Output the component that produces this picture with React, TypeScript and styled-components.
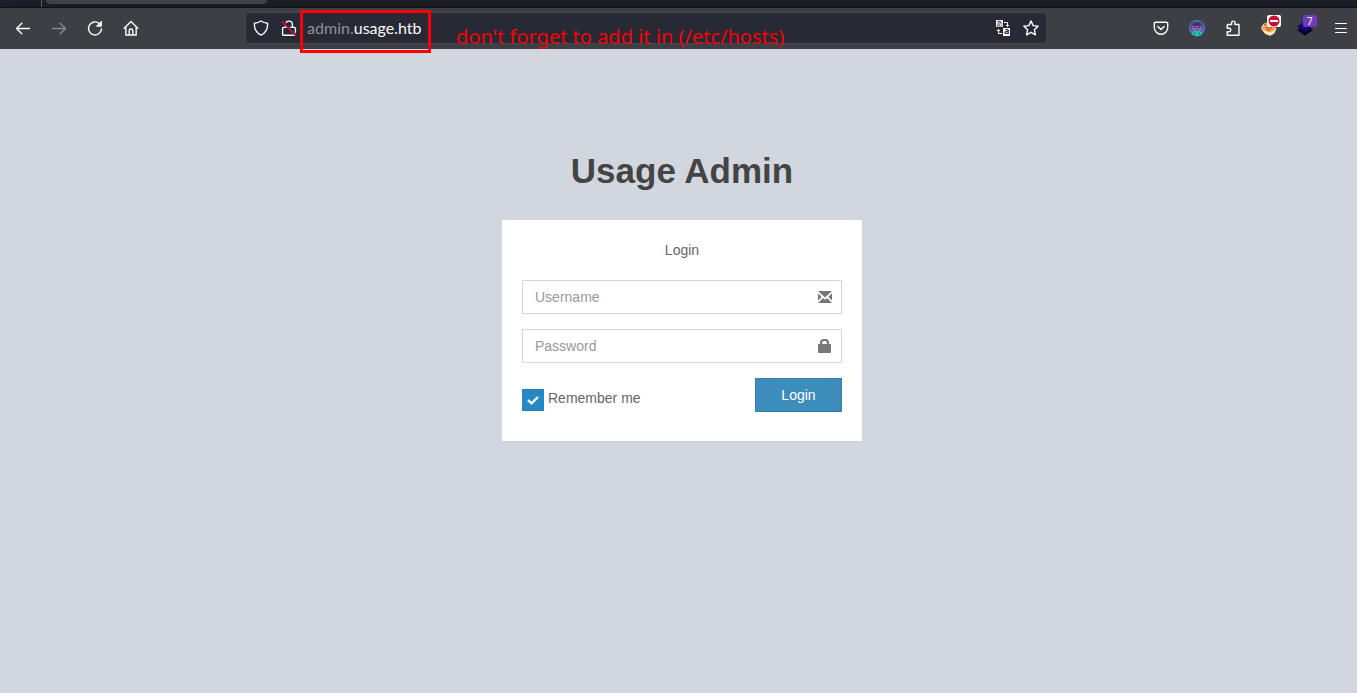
import React from "react";
import styled, { createGlobalStyle } from "styled-components";

const GlobalStyle = createGlobalStyle`
  *, *::before, *::after { box-sizing: border-box; }
  html, body, #root { min-height: 100%; }
  body {
    margin: 0;
    background: #d2d6de;
    color: #333;
    font: 14px/20px "Liberation Sans", Arial, sans-serif;
  }
`;

const Browser = styled.header`
  font-family: "Noto Sans", sans-serif;
  color: #fbfbfe;
`;

const TabStrip = styled.div`
  display: flex;
  height: 8px;
  background: linear-gradient(90deg, #191f2b, #1b1c23 60px, #1a1d26);
  border-bottom: 1px solid #101115;
`;

const PinnedArea = styled.div`
  width: 42px;
  border-right: 1px solid #55565b;
`;

const ActiveTab = styled.div`
  width: 221px;
  height: 4px;
  margin-left: 4px;
  border-radius: 0 0 4px 4px;
  background: #404146;
`;

const Toolbar = styled.div`
  display: flex;
  align-items: center;
  height: 41px;
  padding: 0 8px 1px 15px;
  background: #3e3f44;
`;

const ButtonGroup = styled.div`
  display: flex;
  gap: 20px;
`;

const IconButton = styled.button<{ $dim?: boolean }>`
  position: relative;
  display: block;
  width: 16px;
  height: 16px;
  padding: 0;
  border: 0;
  background: none;
  color: ${(p) => (p.$dim ? "#88898d" : "#fbfbfe")};

  svg { display: block; overflow: visible; }
`;

const Spacer = styled.div`
  flex: 107 1 0;
`;

const AddressBar = styled.div`
  flex: 800 1 0;
  display: flex;
  align-items: center;
  gap: 12px;
  min-width: 0;
  height: 32px;
  padding: 0 7px;
  border: 1px solid #45464d;
  border-radius: 4px;
  background: #272934;
`;

const AddressSlot = styled(AddressBar)`
  margin: 0 1px;
`;

const Address = styled.div`
  position: relative;
  flex: 1;
  margin-left: -2px;
  font-family: Lato, "Noto Sans", sans-serif;
  font-size: 16px;
  line-height: 20px;
  color: #8f9098;
  white-space: nowrap;

  strong { font-weight: 400; color: #fbfbfe; }
`;

const HighlightBox = styled.div`
  position: absolute;
  left: -7px;
  top: -8px;
  width: 131px;
  height: 43px;
  border: 3px solid #fb0007;
`;

const Note = styled.div`
  position: absolute;
  left: 149px;
  top: 5px;
  font-family: "Noto Sans", sans-serif;
  font-size: 20px;
  line-height: 28px;
  color: #f40409;
`;

const Badge = styled.span<{ $color: string }>`
  position: absolute;
  top: -5px;
  right: -4px;
  display: grid;
  place-items: center;
  width: 14px;
  height: 12px;
  border-radius: 2px;
  background: ${(p) => p.$color};
  color: #fff;
  font: 10px/12px "Noto Sans", sans-serif;
`;

const Page = styled.main`
  padding: 97px 0 40px 7px;
`;

const LoginBox = styled.div`
  width: 360px;
  max-width: 100%;
  margin: 0 auto;
`;

const Title = styled.h1`
  margin: 0 0 24px;
  font-size: 35px;
  line-height: 50px;
  font-weight: 700;
  text-align: center;
  color: #444;
`;

const Card = styled.form`
  padding: 20px;
  background: #fff;
  color: #666;
`;

const Message = styled.p`
  margin: 0 0 20px;
  text-align: center;
`;

const Field = styled.label`
  position: relative;
  display: block;
  margin-bottom: 15px;

  svg {
    position: absolute;
    top: 10px;
    right: 10px;
    color: #777;
  }
`;

const TextInput = styled.input`
  display: block;
  width: 100%;
  height: 34px;
  padding: 6px 42px 6px 12px;
  border: 1px solid #d2d6de;
  border-radius: 0;
  background: #fff;
  font: inherit;
  color: #555;

  &::placeholder { color: #999; opacity: 1; }
`;

const Actions = styled.div`
  display: flex;
  justify-content: space-between;
  align-items: flex-start;
`;

const Remember = styled.label`
  display: flex;
  gap: 4px;
  margin: 10px 0;
`;

const CheckWrap = styled.span`
  display: grid;
  margin-top: 1px;

  > * { grid-area: 1 / 1; }
  svg { pointer-events: none; }
`;

const Checkbox = styled.input`
  appearance: none;
  width: 22px;
  height: 22px;
  margin: 0;
  border: 1px solid #d2d6de;

  &:checked { border: 0; background: #2489c5; }
`;

const SubmitButton = styled.button`
  width: 87px;
  height: 34px;
  padding: 0;
  border: 1px solid #367fa9;
  border-radius: 0;
  background: #3c8dbc;
  color: #fff;
  font: inherit;
`;

type IconProps = { children: React.ReactNode; width?: number };

const LineIcon = ({ children, width = 1.4 }: IconProps) => (
  <svg
    width="16"
    height="16"
    viewBox="0 0 16 16"
    fill="none"
    stroke="currentColor"
    strokeWidth={width}
    strokeLinecap="round"
    strokeLinejoin="round"
    aria-hidden="true"
  >
    {children}
  </svg>
);

const shield = "M8 1 C10 2.4 12 3 14.6 3.2 C14.9 8.8 13 12.8 8 15.1 C3 12.8 1.1 8.8 1.4 3.2 C4 3 6 2.4 8 1Z";

export default function App() {
  return (
    <>
      <GlobalStyle />
      <Browser>
        <TabStrip>
          <PinnedArea />
          <ActiveTab />
        </TabStrip>
        <Toolbar>
          <ButtonGroup>
            <IconButton aria-label="Back">
              <LineIcon><path d="M14.5 8.5H1.5M6.8 3.2 1.5 8.5l5.3 5.3" /></LineIcon>
            </IconButton>
            <IconButton aria-label="Forward" $dim disabled>
              <LineIcon><path d="M1.5 8.5h13M9.2 3.2l5.3 5.3-5.3 5.3" /></LineIcon>
            </IconButton>
            <IconButton aria-label="Reload">
              <LineIcon>
                <path d="M12.4 3.6A6.5 6.5 0 1 0 14.5 8.9" />
                <path d="M14.5 1.5v4.7H9.8z" fill="currentColor" strokeWidth="1" />
              </LineIcon>
            </IconButton>
            <IconButton aria-label="Home">
              <LineIcon>
                <path d="M1.2 8.2 8 1.6l6.8 6.6M2.8 7v8h10.4V7M6.2 15v-4.2a1.8 1.8 0 0 1 3.6 0V15" />
              </LineIcon>
            </IconButton>
          </ButtonGroup>
          <Spacer />
          <AddressSlot>
            <IconButton aria-label="Tracking protection">
              <LineIcon><path d={shield} /></LineIcon>
            </IconButton>
            <IconButton aria-label="Connection is not secure">
              <LineIcon>
                <path d="M4.6 7.2V4.5a3.4 3.4 0 0 1 6.8 0v2.7M2.6 7.4h10.8a1 1 0 0 1 1 1v5.8a1 1 0 0 1-1 1H2.6a1 1 0 0 1-1-1V8.4a1 1 0 0 1 1-1z" />
                <path d="M2 1.6 14.8 15" stroke="#272934" strokeWidth="2.4" />
                <path d="M1.2 2 14.5 15.2" stroke="#e20e3d" strokeWidth="1.5" />
              </LineIcon>
            </IconButton>
            <Address>
              admin.<strong>usage.htb</strong>
              <HighlightBox />
              <Note>don't forget to add it in (/etc/hosts)</Note>
            </Address>
            <IconButton aria-label="Translate page">
              <svg width="16" height="16" viewBox="0 0 16 16" aria-hidden="true">
                <rect x="1" y="0" width="7" height="7" fill="#fbfbfe" />
                <rect x="8" y="8" width="7" height="8" fill="#fbfbfe" />
                <text x="1" y="6" fontSize="7" fontFamily="Noto Sans CJK JP" fill="#272934">あ</text>
                <text x="9" y="14" fontSize="9" fontWeight="700" fontFamily="Noto Sans" fill="#272934">a</text>
                <path d="M9 2.5h3.5v4M11 5l1.5 1.5L14 5M7 13.5H3.5v-4M2 11l1.5-1.5L5 11" fill="none" stroke="#fbfbfe" />
              </svg>
            </IconButton>
            <IconButton aria-label="Bookmark this page">
              <LineIcon>
                <path d="m8 .9 2.1 4.7 5 .6-3.7 3.5 1 5.2L8 12.3l-4.4 2.6 1-5.2L.9 6.2l5-.6z" />
              </LineIcon>
            </IconButton>
          </AddressSlot>
          <Spacer />
          <ButtonGroup>
            <IconButton aria-label="Pocket">
              <LineIcon>
                <path d="M2.5 2.2h11a1.2 1.2 0 0 1 1.2 1.2v4.1a6.7 6.7 0 0 1-13.4 0V3.4a1.2 1.2 0 0 1 1.2-1.2zM4.8 6.4 8 9.5l3.2-3.1" />
              </LineIcon>
            </IconButton>
            <IconButton aria-label="Profile extension">
              <svg width="16" height="16" viewBox="0 0 16 16" aria-hidden="true">
                <circle cx="8" cy="8" r="8" fill="#4877b8" />
                <path d="M1 4 4 1.5 8 3l4-2 3 4-1 4-2 2H4L1 9z" fill="#55509b" />
                <path d="M3.5 3.5 8 1.5l4.5 2L12 6H4z" fill="#3b3765" />
                <path d="M4 6.5h8l1 2.5-2 2H5L3 9z" fill="#b45ab5" />
                <path d="M5 7h2v1H5zM9 7h2v1H9zM6.5 9.5h3v1h-3z" fill="#3a2861" />
                <path d="M3 12.5 6 10.5h4l3 2v2A8 8 0 0 1 3 14.3z" fill="#22c1aa" />
                <path d="M5.5 12v3M10.5 12v3" stroke="#168a91" />
              </svg>
            </IconButton>
            <IconButton aria-label="Extensions">
              <LineIcon>
                <path d="M5.6 4.5h1V2.8a1.7 1.7 0 0 1 3.4 0v1.7h4v10.7H2.2v-3.5h1.9a1.7 1.7 0 0 0 0-3.4H2.2V5.5a1 1 0 0 1 1-1z" />
              </LineIcon>
            </IconButton>
            <IconButton aria-label="Cookie manager">
              <svg width="16" height="16" viewBox="0 0 16 16" aria-hidden="true">
                <path d="M.5 7.5 3 3l6-.5 6 5-1.5 4.8L9 15.5 4 14z" fill="#f4a24c" />
                <path d="M.5 7.5 3 4M.5 8.5 4 13l5 2.3 4-2 2-5-3 3.5-4 1-4-1.500z" fill="#f5e3c8" stroke="#f5e3c8" />
                <path d="m4 7 3-2 5 1-2 4-5-1z" fill="#f08a30" />
                <path d="M5 8h2M8 7l3 1M6 10h3M3 5l2-1" stroke="#8b562c" />
              </svg>
              <Badge $color="#fff">
                <svg width="12" height="12" viewBox="0 0 12 12">
                  <circle cx="6" cy="6" r="5.5" fill="#cc1034" />
                  <path d="M2 6h8" stroke="#fff" strokeWidth="2" />
                </svg>
              </Badge>
            </IconButton>
            <IconButton aria-label="Technology profiler, 7 found">
              <svg width="16" height="16" viewBox="0 0 16 16" aria-hidden="true">
                <path d="M0 10 8 4.5l8 5.5-8 5.8z" fill="#06042a" />
                <path d="M0 6.5 8 1l8 5.5-8 5.700z" fill="#19006e" />
              </svg>
              <Badge $color="#6d3cbc">7</Badge>
            </IconButton>
            <IconButton aria-label="Menu">
              <LineIcon width={1}><path d="M2.5 3.5h11M2.5 8.5h11M2.5 12.5h11" /></LineIcon>
            </IconButton>
          </ButtonGroup>
        </Toolbar>
      </Browser>

      <Page>
        <LoginBox>
          <Title>Usage Admin</Title>
          <Card onSubmit={(e) => e.preventDefault()}>
            <Message>Login</Message>
            <Field>
              <TextInput type="text" name="username" placeholder="Username" aria-label="Username" />
              <svg width="14" height="14" viewBox="0 0 14 14" fill="currentColor" aria-hidden="true">
                <path d="M0 1h14L7 7.6zM0 3.2 3.7 6.9 0 10.6zM14 3.2 10.3 6.9 14 10.6zM0 13l5-5L7 9.8 9 8l5 5z" />
              </svg>
            </Field>
            <Field>
              <TextInput type="password" name="password" placeholder="Password" aria-label="Password" />
              <svg width="14" height="14" viewBox="0 0 14 14" fill="currentColor" aria-hidden="true">
                <path d="M2 5V3.5A3.5 3.5 0 0 1 5.5 0h2A3.5 3.5 0 0 1 11 3.5V5h1a1 1 0 0 1 1 1v7a1 1 0 0 1-1 1H1a1 1 0 0 1-1-1V6a1 1 0 0 1 1-1zM4.2 5h4.6V3.7A1.7 1.7 0 0 0 7.1 2H5.9a1.7 1.7 0 0 0-1.7 1.7z" fillRule="evenodd" />
              </svg>
            </Field>
            <Actions>
              <Remember>
                <CheckWrap>
                  <Checkbox type="checkbox" name="remember" defaultChecked />
                  <svg width="22" height="22" viewBox="0 0 22 22" fill="none" aria-hidden="true">
                    <path d="m6 11 3.5 3.3L16 8" stroke="#fff" strokeWidth="2.4" />
                  </svg>
                </CheckWrap>
                Remember me
              </Remember>
              <SubmitButton type="submit">Login</SubmitButton>
            </Actions>
          </Card>
        </LoginBox>
      </Page>
    </>
  );
}
